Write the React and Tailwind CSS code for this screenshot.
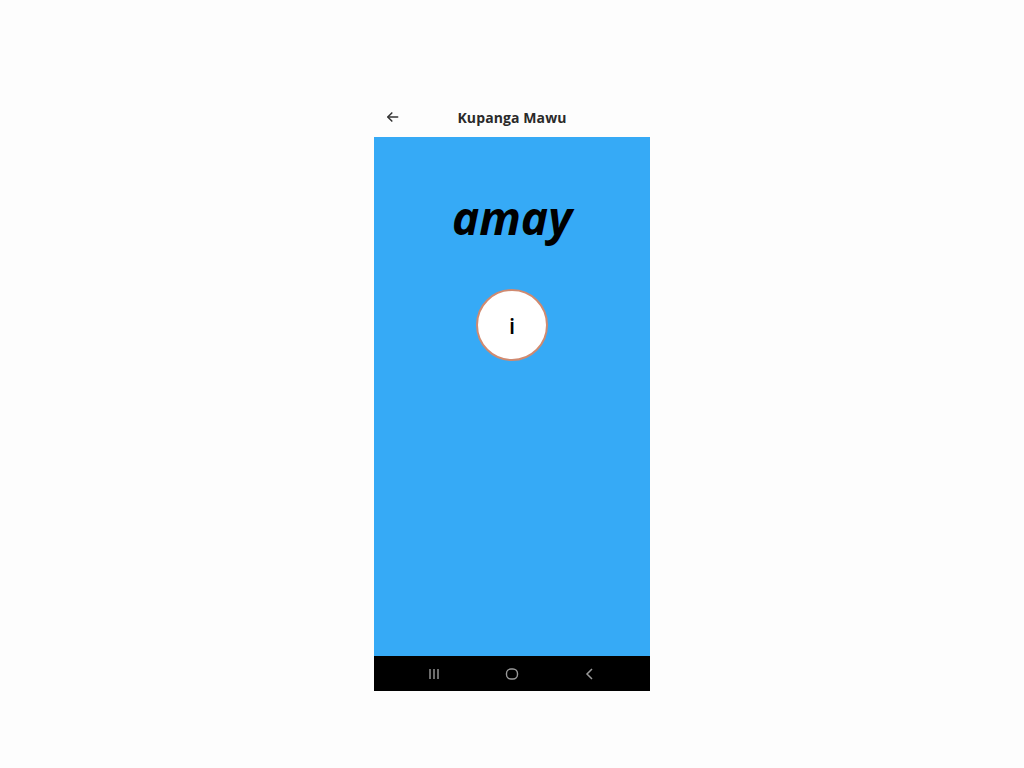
import React from "react";

export default function App() {
  return (
    <div className="w-[1024px] h-[768px] bg-[#fdfdfd] flex flex-col items-center pt-[98px]" style={{ fontFamily: '"Open Sans", sans-serif' }}>
      <div className="w-[276px] flex flex-col">
        <div className="h-[39px] relative flex items-center justify-center bg-[#fdfdfd]">
          <svg className="absolute left-[12px] top-[12px]" width="14" height="14" viewBox="0 0 24 24" fill="none" stroke="#333" strokeWidth="2.6" strokeLinecap="round" strokeLinejoin="round">
            <path d="M20 12H4" />
            <path d="M10 5l-7 7 7 7" />
          </svg>
          <span className="text-[14px] font-bold text-[#2a2a2a] tracking-[0.1px]">Kupanga Mawu</span>
        </div>
        <div className="h-[519px] bg-[#36aaf6] flex flex-col items-center">
          <div className="mt-[57px] text-[46px] leading-none font-bold italic text-black">amay</div>
          <div className="mt-[49px] w-[72px] h-[72px] rounded-full bg-white border-2 border-[#d08a70] flex items-center justify-center">
            <span className="text-[22px] font-semibold text-black leading-none">i</span>
          </div>
        </div>
        <div className="h-[35px] bg-black flex items-center justify-between px-[54px]">
          <svg width="12" height="12" viewBox="0 0 12 12" stroke="#9a9a9a" strokeWidth="1.4">
            <path d="M2 1v10M6 1v10M10 1v10" />
          </svg>
          <svg width="14" height="14" viewBox="0 0 14 14" fill="none" stroke="#9a9a9a" strokeWidth="1.4">
            <rect x="1.5" y="2" width="11" height="10" rx="4.5" />
          </svg>
          <svg width="12" height="14" viewBox="0 0 12 14" fill="none" stroke="#9a9a9a" strokeWidth="1.5">
            <path d="M8 2L3 7l5 5" />
          </svg>
        </div>
      </div>
    </div>
  );
}
